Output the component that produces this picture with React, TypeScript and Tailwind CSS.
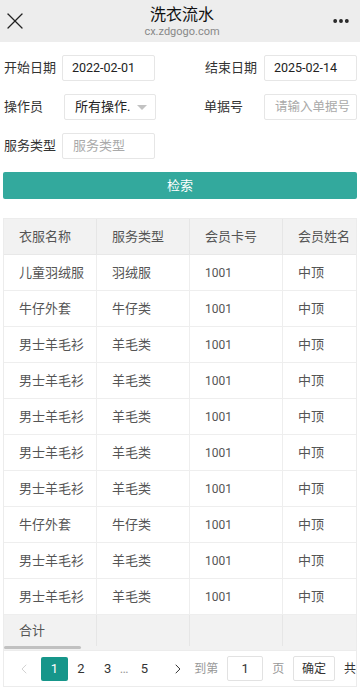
import { X, MoreHorizontal, ChevronLeft, ChevronRight } from 'lucide-react';

const rows = [
  ['儿童羽绒服', '羽绒服', '1001', '中顶'],
  ['牛仔外套', '牛仔类', '1001', '中顶'],
  ['男士羊毛衫', '羊毛类', '1001', '中顶'],
  ['男士羊毛衫', '羊毛类', '1001', '中顶'],
  ['男士羊毛衫', '羊毛类', '1001', '中顶'],
  ['男士羊毛衫', '羊毛类', '1001', '中顶'],
  ['男士羊毛衫', '羊毛类', '1001', '中顶'],
  ['牛仔外套', '牛仔类', '1001', '中顶'],
  ['男士羊毛衫', '羊毛类', '1001', '中顶'],
  ['男士羊毛衫', '羊毛类', '1001', '中顶'],
];

const headers = ['衣服名称', '服务类型', '会员卡号', '会员姓名'];

function Field({ label, children, labelW }: { label: string; children: React.ReactNode; labelW: string }) {
  return (
    <div className="flex items-center">
      <span className={`${labelW} text-[13px] text-[#333]`}>{label}</span>
      {children}
    </div>
  );
}

export default function App() {
  return (
    <div className="w-[360px] h-[688px] overflow-hidden bg-white font-['Roboto','Noto_Sans_CJK_SC',sans-serif]">
      {/* top bar */}
      <div className="h-[42px] bg-[#ededed] flex items-center pl-[1px] pr-[7px]">
        <X className="w-[28px] h-[28px] text-[#222]" strokeWidth={1.1} />
        <div className="flex-1 flex flex-col items-center pt-[1px] pl-[4px]">
          <span className="text-[16px] leading-[20px] text-[#111]">洗衣流水</span>
          <span className="text-[11px] leading-[14px] text-[#888]">cx.zdgogo.com</span>
        </div>
        <MoreHorizontal className="w-[20px] h-[20px] text-[#222] mr-[2px]" strokeWidth={2.6} />
      </div>

      {/* filters */}
      <div className="pl-[4px] pr-[3px] pt-[13px] flex flex-col gap-[13px]">
        <div className="flex justify-between">
          <Field label="开始日期" labelW="w-[58px]">
            <div className="w-[93px] h-[26px] border border-[#e6e6e6] rounded-[2px] flex items-center px-[9px] text-[12.5px] text-[#222]">2022-02-01</div>
          </Field>
          <Field label="结束日期" labelW="w-[59px]">
            <div className="w-[93px] h-[26px] border border-[#e6e6e6] rounded-[2px] flex items-center px-[9px] text-[12.5px] text-[#222]">2025-02-14</div>
          </Field>
        </div>
        <div className="flex justify-between">
          <Field label="操作员" labelW="w-[60px]">
            <div className="w-[92px] h-[26px] border border-[#e6e6e6] rounded-[2px] flex items-center pl-[10px] pr-[8px] text-[13px] text-[#222]">
              <span className="flex-1">所有操作.</span>
              <span className="w-0 h-0 border-l-[5px] border-r-[5px] border-t-[5px] border-l-transparent border-r-transparent border-t-[#c2c2c2]" />
            </div>
          </Field>
          <Field label="单据号" labelW="w-[60px]">
            <div className="w-[93px] h-[26px] border border-[#e6e6e6] rounded-[2px] flex items-center pl-[10px] text-[12.5px] text-[#aaa] whitespace-nowrap overflow-hidden">请输入单据号</div>
          </Field>
        </div>
        <div className="flex">
          <Field label="服务类型" labelW="w-[58px]">
            <div className="w-[93px] h-[26px] border border-[#e6e6e6] rounded-[2px] flex items-center px-[10px] text-[13px] text-[#aaa]">服务类型</div>
          </Field>
        </div>
      </div>

      <div className="px-[3px] pt-[13px]">
        <button className="w-full h-[27px] bg-[#33a99d] rounded-[2px] text-white text-[13px]">检索</button>
      </div>

      {/* table */}
      <div className="mx-[3px] mt-[19px] border border-[#ececec] overflow-hidden">
        <div className="overflow-hidden">
          <div className="w-max">
            <div className="flex bg-[#f2f2f2] h-[36px] border-b border-[#e8e8e8]">
              {headers.map((h) => (
                <div key={h} className="w-[93px] shrink-0 border-r border-[#e6e6e6] flex items-center pl-[15px] text-[13px] text-[#555]">{h}</div>
              ))}
            </div>
            {rows.map((r, i) => (
              <div key={i} className="flex h-[36px] border-b border-[#eeeeee]">
                {r.map((c, j) => (
                  <div key={j} className={`w-[93px] shrink-0 border-r border-[#eeeeee] flex items-center pl-[15px] text-[#555] ${j === 2 ? 'text-[12px]' : 'text-[13px]'}`}>{c}</div>
                ))}
              </div>
            ))}
            <div className="flex h-[31px] bg-[#f2f2f2]">
              {[0, 1, 2, 3].map((j) => (
                <div key={j} className="w-[93px] shrink-0 border-r border-[#e6e6e6] flex items-center pl-[15px] text-[13px] text-[#555]">{j === 0 ? '合计' : ''}</div>
              ))}
            </div>
          </div>
          <div className="h-[4px] bg-[#f2f2f2]">
            <div className="w-[77px] h-[3px] bg-[#c1c1c1] rounded-full" />
          </div>
        </div>

        {/* pagination */}
        <div className="h-[36px] border-t border-[#ececec] flex items-center pl-[12px] text-[13px] text-[#333] whitespace-nowrap">
          <ChevronLeft className="w-[16px] h-[16px] text-[#d2d2d2]" strokeWidth={1.5} />
          <div className="ml-[9px] w-[27px] h-[24px] bg-[#16968a] rounded-[2px] text-white flex items-center justify-center">1</div>
          <span className="ml-[9px] w-[8px] text-center">2</span>
          <span className="ml-[19px] w-[8px] text-center">3</span>
          <span className="ml-[8px] text-[#999]">…</span>
          <span className="ml-[12px] w-[8px] text-center">5</span>
          <ChevronRight className="ml-[22px] w-[16px] h-[16px] text-[#333]" strokeWidth={1.5} />
          <span className="ml-[8px] text-[12px] text-[#999]">到第</span>
          <div className="ml-[9px] w-[36px] h-[25px] border border-[#e2e2e2] rounded-[2px] flex items-center justify-center">1</div>
          <span className="ml-[9px] text-[12px] text-[#999]">页</span>
          <div className="ml-[9px] w-[42px] h-[25px] border border-[#e2e2e2] rounded-[2px] flex items-center justify-center text-[12px]">确定</div>
          <span className="ml-[9px] text-[12px]">共</span>
        </div>
      </div>
    </div>
  );
}
